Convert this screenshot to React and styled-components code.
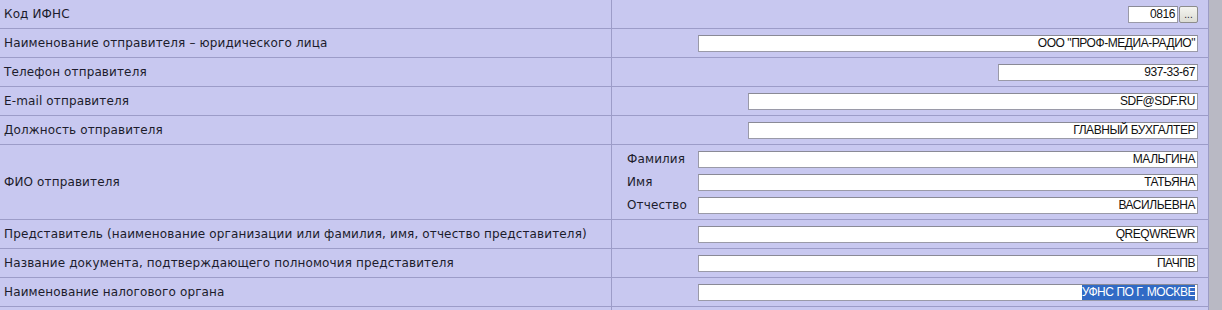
import React from "react";
import styled, { createGlobalStyle } from "styled-components";

const Global = createGlobalStyle`
  html, body {
    margin: 0;
    padding: 0;
    background: #b9b9c4;
  }
`;

const Table = styled.div`
  width: 1208px;
  display: grid;
  grid-template-columns: 611px 1fr;
  background: #c8c8f0;
  border-right: 1px solid #9c9cc4;
  font-family: "DejaVu Sans", Verdana, sans-serif;
  font-size: 12px;
  letter-spacing: 0.13px;
  color: #1c1c2c;
`;

const Label = styled.div`
  height: ${(p) => p.h || 28}px;
  border-bottom: 1px solid #9c9cc8;
  display: flex;
  align-items: center;
  padding-left: 4px;
  white-space: nowrap;
`;

const Value = styled.div`
  height: ${(p) => p.h || 28}px;
  border-bottom: 1px solid #9c9cc8;
  border-left: 1px solid #9c9cc8;
  display: flex;
  align-items: center;
  justify-content: flex-end;
  padding-right: 11px;
`;

const Field = styled.div`
  width: ${(p) => p.w}px;
  height: 17px;
  box-sizing: border-box;
  background: #fff;
  border: 1px solid #9a9aa8;
  border-top-color: #8a8a96;
  font-family: "Liberation Sans", Arial, sans-serif;
  font-size: 12px;
  letter-spacing: -0.45px;
  color: #111;
  display: flex;
  align-items: center;
  justify-content: flex-end;
  padding-right: 2px;
  white-space: nowrap;
`;

const Selected = styled.span`
  background: #316ac5;
  color: #fff;
  line-height: 15px;
`;

const DotsButton = styled.div`
  width: 19px;
  height: 17px;
  box-sizing: border-box;
  margin-left: 1px;
  background: linear-gradient(#f4f4f0, #dcdcd4);
  border: 1px solid #8c8c8c;
  border-radius: 2px;
  font-family: "Liberation Sans", Arial, sans-serif;
  font-size: 10px;
  display: flex;
  align-items: flex-end;
  justify-content: center;
  padding-bottom: 3px;
  line-height: 8px;
`;

const NameBlock = styled.div`
  width: 100%;
  display: grid;
  grid-template-columns: 71px 1fr;
  row-gap: 6px;
  align-items: center;
  padding-left: 15px;
`;

const SubLabel = styled.div`
  white-space: nowrap;
`;

const rows = [
  { label: "Наименование отправителя – юридического лица", w: 500, v: 'ООО "ПРОФ-МЕДИА-РАДИО"' },
  { label: "Телефон отправителя", w: 200, v: "937-33-67" },
  { label: "E-mail отправителя", w: 450, v: "SDF@SDF.RU" },
  { label: "Должность отправителя", w: 450, v: "ГЛАВНЫЙ БУХГАЛТЕР" },
];

const rows2 = [
  { label: "Представитель (наименование организации или фамилия, имя, отчество представителя)", w: 500, v: "QREQWREWR" },
  { label: "Название документа, подтверждающего полномочия представителя", w: 500, v: "ПАЧПВ" },
];

const names = [
  ["Фамилия", "МАЛЬГИНА"],
  ["Имя", "ТАТЬЯНА"],
  ["Отчество", "ВАСИЛЬЕВНА"],
];

export default function App() {
  return (
    <>
      <Global />
      <Table>
        <Label>Код ИФНС</Label>
        <Value>
          <Field w={50}>0816</Field>
          <DotsButton>...</DotsButton>
        </Value>
        {rows.map((r) => (
          <React.Fragment key={r.label}>
            <Label>{r.label}</Label>
            <Value>
              <Field w={r.w}>{r.v}</Field>
            </Value>
          </React.Fragment>
        ))}
        <Label h={74}>ФИО отправителя</Label>
        <Value h={74}>
          <NameBlock>
            {names.map(([l, v]) => (
              <React.Fragment key={l}>
                <SubLabel>{l}</SubLabel>
                <Field w={500}>{v}</Field>
              </React.Fragment>
            ))}
          </NameBlock>
        </Value>
        {rows2.map((r) => (
          <React.Fragment key={r.label}>
            <Label>{r.label}</Label>
            <Value>
              <Field w={r.w}>{r.v}</Field>
            </Value>
          </React.Fragment>
        ))}
        <Label>Наименование налогового органа</Label>
        <Value>
          <Field w={500}>
            <Selected>УФНС ПО Г. МОСКВЕ</Selected>
          </Field>
        </Value>
        <Label h={8} />
        <Value h={8} />
      </Table>
    </>
  );
}
